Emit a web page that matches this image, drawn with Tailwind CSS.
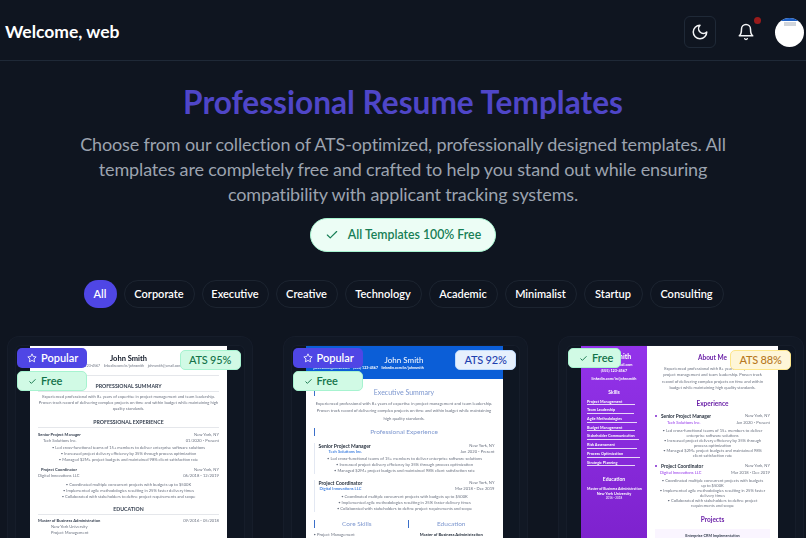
<!DOCTYPE html>
<html lang="en">
<head>
<meta charset="UTF-8">
<title>Resume Templates</title>
<script src="https://cdn.jsdelivr.net/npm/@tailwindcss/browser@4"></script>
</head>
<body class="bg-[#0f1520] h-[538px] overflow-hidden font-['Lato',sans-serif] text-white">

<!-- header -->
<header class="h-[61px] border-b border-[#1f2937] flex items-center justify-between pl-[5px] pr-[2px] pt-[3px]">
  <h2 class="text-[17.5px] font-bold mt-[2px]">Welcome, web</h2>
  <div class="flex items-center">
    <button class="w-8 h-8 rounded-md border border-[#1f2937] flex items-center justify-center">
      <svg class="w-[18px] h-[18px]" viewBox="0 0 24 24" fill="none" stroke="#f3f4f6" stroke-width="2" stroke-linecap="round" stroke-linejoin="round"><path d="M12 3a6 6 0 0 0 9 9 9 9 0 1 1-9-9Z"/></svg>
    </button>
    <div class="relative ml-[14px] w-8 h-8 flex items-center justify-center">
      <svg class="w-[18px] h-[18px]" viewBox="0 0 24 24" fill="none" stroke="#f3f4f6" stroke-width="2" stroke-linecap="round" stroke-linejoin="round"><path d="M6 8a6 6 0 0 1 12 0c0 7 3 9 3 9H3s3-2 3-9"/><path d="M10.3 21a1.94 1.94 0 0 0 3.4 0"/></svg>
      <span class="absolute top-[1px] right-[1px] w-[7px] h-[7px] rounded-full bg-[#991b1b]"></span>
    </div>
    <div class="ml-[13px] mt-[1px] w-[29px] h-[29px] rounded-full bg-white overflow-hidden">
      <div class="h-[3px] bg-[#1d5fc4]"></div>
      <div class="mx-auto mt-[1px] w-3 h-1 bg-[#d1d5db]"></div>
    </div>
  </div>
</header>

<!-- hero -->
<section class="flex flex-col items-center">
  <h1 class="mt-[21px] text-[31.6px] leading-[40px] font-bold text-[#4f46c8]">Professional Resume Templates</h1>
  <p class="mt-[10px] w-[672px] text-center text-[18px] leading-[25px] text-[#9ca3af] tracking-[-0.14px]">Choose from our collection of ATS-optimized, professionally designed templates. All templates are completely free and crafted to help you stand out while ensuring compatibility with applicant tracking systems.</p>
  <div class="mt-[11px] h-[34px] w-[186px] rounded-full bg-[#ecfdf5] border border-[#a7f3d0] flex items-center justify-center gap-[9px] text-[12.3px] font-semibold text-[#177e55]">
    <svg class="w-[14px] h-[14px]" viewBox="0 0 24 24" fill="none" stroke="#177e55" stroke-width="2" stroke-linecap="round" stroke-linejoin="round"><path d="M20 6 9 17l-5-5"/></svg>
    All Templates 100% Free
  </div>
  <nav class="mt-[28px] ml-[1px] flex gap-[7px] text-[11px] font-semibold">
    <button class="h-7 w-[33px] rounded-full bg-[#4f46e5]">All</button>
    <button class="h-7 w-[71px] rounded-full border border-[#1c2430]">Corporate</button>
    <button class="h-7 w-[67px] rounded-full border border-[#1c2430]">Executive</button>
    <button class="h-7 w-[62px] rounded-full border border-[#1c2430]">Creative</button>
    <button class="h-7 w-[77px] rounded-full border border-[#1c2430]">Technology</button>
    <button class="h-7 w-[69px] rounded-full border border-[#1c2430]">Academic</button>
    <button class="h-7 w-[72px] rounded-full border border-[#1c2430]">Minimalist</button>
    <button class="h-7 w-[59px] rounded-full border border-[#1c2430]">Startup</button>
    <button class="h-7 w-[74px] rounded-full border border-[#1c2430]">Consulting</button>
  </nav>
</section>

<!-- cards -->
<section class="mt-[28px] pl-[7px] flex gap-[30px]">

  <article class="relative w-[245.5px] h-[202px] shrink-0 rounded-t-xl border border-[#161d2a] border-b-0 bg-[#111824] pt-[8px] px-[7px]">
    <div class="h-full rounded-t-md border-x border-t border-[#161d2a] bg-[#0f1622] pl-[14px]">
      <div class="w-[197px] h-full overflow-hidden bg-white text-[#6b7280] px-[8px] pt-[7px] text-[4.1px] leading-[6.2px] blur-[0.3px]">
        <div class="text-center text-[7.5px] leading-[11px] font-bold text-[#111827]">John Smith</div>
        <div class="text-center text-[3.5px] leading-[5px] pb-[6px] border-b border-[#e5e7eb]">(555) 123-4567 &nbsp;&nbsp; linkedin.com/in/johnsmith &nbsp;&nbsp; johnsmith@email.com</div>
        <div class="mt-[6px] text-center text-[5.2px] leading-[8px] font-bold text-[#374151] border-b border-[#e5e7eb] pb-[1px]">PROFESSIONAL SUMMARY</div>
        <p class="mt-[2px] text-center">Experienced professional with 8+ years of expertise in project management and team leadership. Proven track record of delivering complex projects on time and within budget while maintaining high quality standards.</p>
        <div class="mt-[5px] text-center text-[5.2px] leading-[8px] font-bold text-[#374151] border-b border-[#e5e7eb] pb-[1px]">PROFESSIONAL EXPERIENCE</div>
        <div class="mt-[4px] flex justify-between"><b class="text-[#374151]">Senior Project Manager</b><span>New York, NY</span></div>
        <div class="flex justify-between"><span class="pl-[5px]">Tech Solutions Inc.</span><span>01/2020 - Present</span></div>
        <div class="mt-[1px] text-center">• Led cross-functional teams of 15+ members to deliver enterprise software solutions<br>• Increased project delivery efficiency by 35% through process optimization<br>• Managed $2M+ project budgets and maintained 98% client satisfaction rate</div>
        <div class="mt-[3px] flex justify-between"><b class="pl-[3px] text-[#374151]">Project Coordinator</b><span>New York, NY</span></div>
        <div class="flex justify-between"><span>Digital Innovations LLC</span><span>06/2018 - 12/2019</span></div>
        <div class="mt-[3px] text-center">• Coordinated multiple concurrent projects with budgets up to $500K<br>• Implemented agile methodologies resulting in 25% faster delivery times<br>• Collaborated with stakeholders to define project requirements and scope</div>
        <div class="mt-[4px] text-center text-[5.2px] leading-[8px] font-bold text-[#374151] border-b border-[#e5e7eb] pb-[1px]">EDUCATION</div>
        <div class="mt-[3px] flex justify-between"><b class="text-[#374151]">Master of Business Administration</b><span>09/2016 - 05/2018</span></div>
        <div class="pl-[13px]">New York University</div>
        <div class="pl-[13px]">Project Management</div>
      </div>
    </div>
    <span class="absolute left-[9px] top-[11px] w-[70px] h-5 rounded-[5px] bg-[#4f46e5] flex items-center gap-[4px] pl-[10px] text-[11px] font-semibold"><svg class="w-[10px] h-[10px]" viewBox="0 0 24 24" fill="none" stroke="white" stroke-width="2" stroke-linejoin="round"><path d="M12 2l3 6.500 7 .9-5.100 4.800 1.300 7L12 17.800 5.800 21.200l1.300-7L2 9.400l7-.9Z"/></svg>Popular</span>
    <span class="absolute left-[9px] top-[34px] w-[70px] h-5 rounded-[5px] bg-[#d1fae5] border border-[#a7f3d0] flex items-center gap-[4px] pl-[10px] text-[11px] font-semibold text-[#14734a]"><svg class="w-[9px] h-[9px]" viewBox="0 0 24 24" fill="none" stroke="#14734a" stroke-width="2.500"><path d="M20 6 9 17l-5-5"/></svg>Free</span>
    <span class="absolute left-[171.5px] top-[13px] w-[61px] h-[20px] rounded-[5px] bg-[#d1fae5] border border-[#a7f3d0] flex items-center justify-center text-[11px] tracking-[-0.2px] font-medium text-[#14734a]">ATS 95%</span>
  </article>

  <article class="relative w-[245.5px] h-[202px] shrink-0 rounded-t-xl border border-[#161d2a] border-b-0 bg-[#111824] pt-[8px] px-[7px]">
    <div class="h-full rounded-t-md border-x border-t border-[#161d2a] bg-[#0f1622] pl-[14px]">
      <div class="w-[197px] h-full overflow-hidden bg-white text-[#6b7280] text-[4.15px] leading-[6px] blur-[0.3px]">
        <div class="h-[33px] bg-[#0b5ed7] text-white pt-[9px]">
          <div class="text-center text-[8px] leading-[10px]">John Smith</div>
          <div class="pl-[8px] text-[3.6px] leading-[6px] font-bold whitespace-nowrap">john.smith@email.com &nbsp;&nbsp; (555) 123-4567 &nbsp;&nbsp; linkedin.com/in/johnsmith</div>
        </div>
        <div class="px-[8px]">
          <div class="relative mt-[8px] text-center text-[7px] leading-[10px] text-[#7d97cf]"><span class="absolute left-0 top-[1px] w-[1px] h-[8px] bg-[#3b6fc9]"></span>Executive Summary</div>
          <p class="mt-[3px] text-center text-[4.2px] leading-[7.3px]">Experienced professional with 8+ years of expertise in project management and team leadership. Proven track record of delivering complex projects on time and within budget while maintaining high quality standards.</p>
          <div class="mt-[5px] relative text-center text-[6.5px] leading-[10px] text-[#7d97cf]"><span class="absolute left-0 top-[1px] w-[1px] h-[8px] bg-[#3b6fc9]"></span>Professional Experience</div>
          <div class="mt-[6px] border-l border-[#e3e8f2]">
            <div class="flex justify-between pl-[4px]"><b class="text-[#1f2937] text-[5px]">Senior Project Manager</b><span>New York, NY</span></div>
            <div class="flex justify-between pl-[14px]"><span class="text-[#0b5ed7]">Tech Solutions Inc.</span><span>Jan 2020 - Present</span></div>
            <div class="mt-[1px] text-center">• Led cross-functional teams of 15+ members to deliver enterprise software solutions<br>• Increased project delivery efficiency by 35% through process optimization<br>• Managed $2M+ project budgets and maintained 98% client satisfaction rate</div>
          </div>
          <div class="mt-[6px] border-l border-[#e3e8f2]">
            <div class="flex justify-between pl-[4px]"><b class="text-[#1f2937] text-[5px]">Project Coordinator</b><span>New York, NY</span></div>
            <div class="flex justify-between pl-[5px]"><span class="text-[#0b5ed7]">Digital Innovations LLC</span><span>Mar 2018 - Dec 2019</span></div>
            <div class="mt-[2px] text-center">• Coordinated multiple concurrent projects with budgets up to $500K<br>• Implemented agile methodologies resulting in 25% faster delivery times<br>• Collaborated with stakeholders to define project requirements and scope</div>
          </div>
          <div class="mt-[7px] grid grid-cols-2 gap-[8px] text-[6.5px] leading-[10px] text-[#7d97cf] text-center">
            <div class="relative"><span class="absolute left-0 top-[1px] w-[1px] h-[8px] bg-[#3b6fc9]"></span>Core Skills</div>
            <div class="relative"><span class="absolute left-0 top-[1px] w-[1px] h-[8px] bg-[#3b6fc9]"></span>Education</div>
          </div>
          <div class="mt-[3px] grid grid-cols-2 gap-[8px]"><div>• Project Management</div><b class="text-center text-[#1f2937]">Master of Business Administration</b></div>
        </div>
      </div>
    </div>
    <span class="absolute left-[9px] top-[11px] w-[70px] h-5 rounded-[5px] bg-[#4f46e5] flex items-center gap-[4px] pl-[10px] text-[11px] font-semibold"><svg class="w-[10px] h-[10px]" viewBox="0 0 24 24" fill="none" stroke="white" stroke-width="2" stroke-linejoin="round"><path d="M12 2l3 6.500 7 .9-5.100 4.800 1.300 7L12 17.800 5.800 21.200l1.300-7L2 9.400l7-.9Z"/></svg>Popular</span>
    <span class="absolute left-[9px] top-[34px] w-[70px] h-5 rounded-[5px] bg-[#d1fae5] border border-[#a7f3d0] flex items-center gap-[4px] pl-[10px] text-[11px] font-semibold text-[#14734a]"><svg class="w-[9px] h-[9px]" viewBox="0 0 24 24" fill="none" stroke="#14734a" stroke-width="2.500"><path d="M20 6 9 17l-5-5"/></svg>Free</span>
    <span class="absolute left-[171.5px] top-[13px] w-[61px] h-[20px] rounded-[5px] bg-[#e6f0fd] border border-[#bfdbfe] flex items-center justify-center text-[11px] tracking-[-0.2px] font-medium text-[#1e40af]">ATS 92%</span>
  </article>

  <article class="relative w-[245.5px] h-[202px] shrink-0 rounded-t-xl border border-[#161d2a] border-b-0 bg-[#111824] pt-[8px] px-[7px]">
    <div class="h-full rounded-t-md border-x border-t border-[#161d2a] bg-[#0f1622] pl-[14px]">
      <div class="w-[197px] h-full overflow-hidden bg-white flex text-[3.8px] leading-[6px] blur-[0.3px]">
        <aside class="w-[66px] shrink-0 bg-gradient-to-b from-[#9333ea] to-[#7e22ce] text-white px-[6px] text-center font-bold">
          <div class="pt-[6px] text-[7px] leading-[9px] whitespace-nowrap">John Smith</div>
          <div class="mt-[1px] whitespace-nowrap">johnsmith@email.com</div>
          <div>(555) 123-4567</div>
          <div class="mt-[1.7px]">linkedin.com/in/johnsmith</div>
          <div class="mt-[7px] text-[5px]">Skills</div>
          <ul class="mt-[2px] text-left whitespace-nowrap">
            <li class="border-b border-white/80 h-[8.700px] pt-[2px] w-[48px]">Project Management</li>
            <li class="border-b border-white/80 h-[8.700px] pt-[2px] w-[47px]">Team Leadership</li>
            <li class="border-b border-white/80 h-[8.700px] pt-[2px] w-[49.5px]">Agile Methodologies</li>
            <li class="border-b border-white/80 h-[8.700px] pt-[2px] w-[48px]">Budget Management</li>
            <li class="border-b border-white/80 h-[8.700px] pt-[2px] w-[51.5px]">Stakeholder Communication</li>
            <li class="border-b border-white/80 h-[8.700px] pt-[2px] w-[50px]">Risk Assessment</li>
            <li class="border-b border-white/80 h-[8.700px] pt-[2px] w-[53px]">Process Optimization</li>
            <li class="border-b border-white/80 h-[8.700px] pt-[2px] w-[48px]">Strategic Planning</li>
          </ul>
          <div class="mt-[9.4px] text-[5px]">Education</div>
          <div class="mt-[4.5px] leading-[5px] whitespace-nowrap text-[3.6px]">Master of Business Administration</div>
          <div class="leading-[5px]">New York University</div>
          <div class="leading-[5px] font-normal text-[3px]">2016 - 2018</div>
        </aside>
        <div class="min-w-0 flex-1 px-[8px] text-[#6b7280] text-center text-[4.1px]">
          <div class="pt-[7px] text-[6.5px] leading-[9px] font-bold text-[#6b21a8]">About Me</div>
          <p class="mt-[4px] px-[3px] leading-[6.4px]">Experienced professional with 8+ years of expertise in project management and team leadership. Proven track record of delivering complex projects on time and within budget while maintaining high quality standards.</p>
          <div class="mt-[7.6px] text-[6.5px] leading-[9px] font-bold text-[#6b21a8]">Experience</div>
          <div class="mt-[5px] flex justify-between text-left"><b class="relative text-[#1f2937] text-[4.8px] pl-[6px]"><span class="absolute left-0 top-[2px] w-[2px] h-[2px] rounded-full bg-[#7e22ce]"></span>Senior Project Manager</b><span>New York, NY</span></div>
          <div class="mt-[1px] flex justify-between"><span class="text-[#9333ea] pl-[12px]">Tech Solutions Inc.</span><span>Jan 2020 - Present</span></div>
          <p class="mt-[1.5px] px-[4px] leading-[5px]">• Led cross-functional teams of 15+ members to deliver enterprise software solutions<br>• Increased project delivery efficiency by 35% through process optimization<br>• Managed $2M+ project budgets and maintained 98% client satisfaction rate</p>
          <div class="mt-[5.5px] flex justify-between text-left"><b class="relative text-[#1f2937] text-[4.8px] pl-[6px]"><span class="absolute left-0 top-[2px] w-[2px] h-[2px] rounded-full bg-[#7e22ce]"></span>Project Coordinator</b><span>New York, NY</span></div>
          <div class="mt-[1px] flex justify-between"><span class="text-[#9333ea] pl-[5px]">Digital Innovations LLC</span><span>Mar 2018 - Dec 2019</span></div>
          <p class="mt-[1.5px] px-[4px] leading-[5px]">• Coordinated multiple concurrent projects with budgets up to $500K<br>• Implemented agile methodologies resulting in 25% faster delivery times<br>• Collaborated with stakeholders to define project requirements and scope</p>
          <div class="mt-[7px] text-[6.5px] leading-[9px] font-bold text-[#6b21a8]">Projects</div>
          <div class="mt-[5.5px] bg-[#faf5ff] pt-[4px] px-[2px] text-[3.8px]"><b class="text-[#374151]">Enterprise CRM Implementation</b><br>Led the implementation of a company-wide CRM system across 500+</div>
        </div>
      </div>
    </div>
    <span class="absolute left-[9px] top-[11px] w-[53px] h-5 rounded-[5px] bg-[#d1fae5] border border-[#a7f3d0] flex items-center gap-[4px] pl-[10px] text-[11px] font-semibold text-[#14734a]"><svg class="w-[9px] h-[9px]" viewBox="0 0 24 24" fill="none" stroke="#14734a" stroke-width="2.500"><path d="M20 6 9 17l-5-5"/></svg>Free</span>
    <span class="absolute left-[171px] top-[13px] w-[61px] h-[20px] rounded-[5px] bg-[#fef6d8] border border-[#fde68a] flex items-center justify-center text-[11px] tracking-[-0.2px] font-medium text-[#b7791f]">ATS 88%</span>
  </article>

</section>
</body>
</html>
